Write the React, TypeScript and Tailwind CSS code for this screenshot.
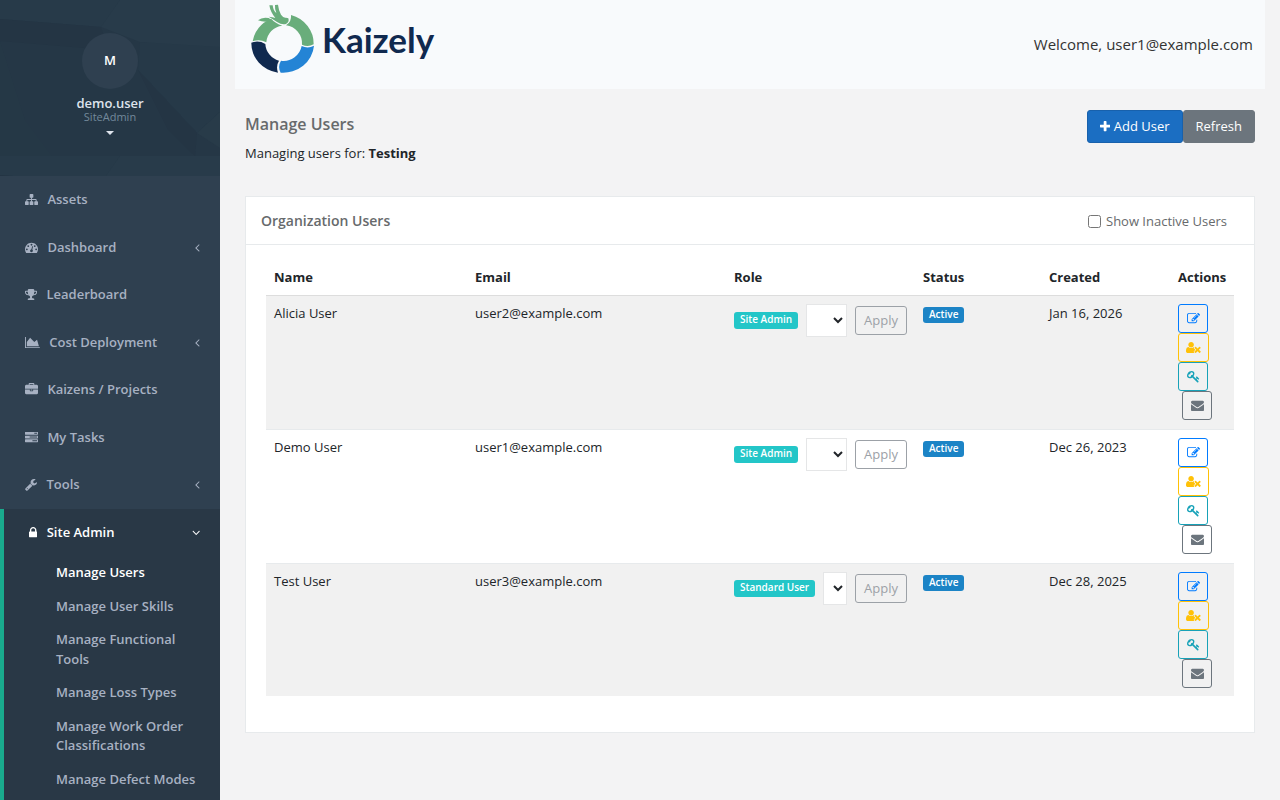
import type { ReactNode } from "react";

const ICONS = {
  sitemap: { box: "0 0 1792 1792", d: "M1792 1248v320q0 40-28 68t-68 28h-320q-40 0-68-28t-28-68v-320q0-40 28-68t68-28h96v-192h-512v192h96q40 0 68 28t28 68v320q0 40-28 68t-68 28h-320q-40 0-68-28t-28-68v-320q0-40 28-68t68-28h96v-192h-512v192h96q40 0 68 28t28 68v320q0 40-28 68t-68 28h-320q-40 0-68-28t-28-68v-320q0-40 28-68t68-28h96v-192q0-52 38-90t90-38h512v-192h-96q-40 0-68-28t-28-68v-320q0-40 28-68t68-28h320q40 0 68 28t28 68v320q0 40-28 68t-68 28h-96v192h512q52 0 90 38t38 90v192h96q40 0 68 28t28 68z" },
  tachometer: { box: "0 0 1792 1792", d: "M384 1152q0-53-37.5-90.5t-90.5-37.5-90.5 37.5-37.5 90.5 37.5 90.5 90.5 37.5 90.5-37.5 37.5-90.5zm192-448q0-53-37.5-90.5t-90.5-37.5-90.5 37.5-37.5 90.5 37.5 90.5 90.5 37.5 90.5-37.5 37.5-90.5zm428 481l101-382q6-26-7.5-48.5t-38.5-29.5-48 6.5-30 39.5l-101 382q-60 5-107 43.5t-63 98.5q-20 77 20 146t117 89 146-20 89-117q16-60-6-117t-72-91zm660-33q0-53-37.5-90.5t-90.5-37.5-90.5 37.5-37.5 90.5 37.5 90.5 90.5 37.5 90.5-37.5 37.5-90.5zm-640-640q0-53-37.5-90.5t-90.5-37.5-90.5 37.5-37.5 90.5 37.5 90.5 90.5 37.5 90.5-37.5 37.5-90.5zm448 192q0-53-37.5-90.5t-90.5-37.5-90.5 37.5-37.5 90.5 37.5 90.5 90.5 37.5 90.5-37.5 37.5-90.5zm320 448q0 261-141 483-19 29-54 29h-1402q-35 0-54-29-141-221-141-483 0-182 71-348t191-286 286-191 348-71 348 71 286 191 191 286 71 348z" },
  trophy: { box: "64 0 1664 1792", d: "M522 883q-74-162-74-371h-256v96q0 78 94.5 162t235.5 113zm1078-275v-96h-256q0 209-74 371 141-29 235.5-113t94.5-162zm128-128v128q0 71-41.5 143t-112 130-173 97.5-215.5 44.5q-42 54-95 95-38 34-52.5 72.5t-14.5 89.5q0 54 30.5 91t97.5 37q75 0 133.5 45.5t58.5 114.5v64q0 14-9 23t-23 9h-832q-14 0-23-9t-9-23v-64q0-69 58.5-114.5t133.5-45.5q67 0 97.5-37t30.5-91q0-51-14.5-89.5t-52.5-72.5q-53-41-95-95-113-5-215.5-44.5t-173-97.5-112-130-41.5-143v-128q0-40 28-68t68-28h288v-96q0-66 47-113t113-47h576q66 0 113 47t47 113v96h288q40 0 68 28t28 68z" },
  areaChart: { box: "0 0 2048 1792", d: "M2048 1536v128h-2048v-1536h128v1408h1920zm-384-1024l256 896h-1664v-576l448-576 576 576z" },
  briefcase: { box: "0 0 1792 1792", d: "M640 256h512v-128h-512v128zm1152 640v480q0 66-47 113t-113 47h-1472q-66 0-113-47t-47-113v-480h672v160q0 26 19 45t45 19h320q26 0 45-19t19-45v-160h672zm-768 0v128h-256v-128h256zm768-480v384h-1792v-384q0-66 47-113t113-47h352v-160q0-40 28-68t68-28h576q40 0 68 28t28 68v160h352q66 0 113 47t47 113z" },
  tasks: { box: "0 0 1792 1792", d: "M1024 1408h640v-128h-640v128zm-384-512h1024v-128h-1024v128zm640-512h384v-128h-384v128zm512 832v256q0 26-19 45t-45 19h-1664q-26 0-45-19t-19-45v-256q0-26 19-45t45-19h1664q26 0 45 19t19 45zm0-512v256q0 26-19 45t-45 19h-1664q-26 0-45-19t-19-45v-256q0-26 19-45t45-19h1664q26 0 45 19t19 45zm0-512v256q0 26-19 45t-45 19h-1664q-26 0-45-19t-19-45v-256q0-26 19-45t45-19h1664q26 0 45 19t19 45z" },
  wrench: { box: "64 0 1664 1792", d: "M448 1472q0-26-19-45t-45-19-45 19-19 45 19 45 45 19 45-19 19-45zm644-420l-682 682q-37 37-90 37-52 0-91-37l-106-108q-38-36-38-90 0-53 38-91l681-681q39 98 114.5 173.5t173.5 114.5zm634-435q0 39-23 106-47 134-164.5 217.5t-258.5 83.5q-185 0-316.5-131.5t-131.5-316.5 131.5-316.5 316.5-131.5q58 0 121.5 16.5t107.5 46.5q16 11 16 28t-16 28l-293 169v224l193 107q5-3 79-48.5t135.5-81 70.5-35.5q15 0 23.5 10t8.5 25z" },
  lock: { box: "320 0 1152 1792", d: "M640 768h512v-192q0-106-75-181t-181-75-181 75-75 181v192zm832 96v576q0 40-28 68t-68 28h-960q-40 0-68-28t-28-68v-576q0-40 28-68t68-28h32v-192q0-184 132-316t316-132 316 132 132 316v192h32q40 0 68 28t28 68z" },
  angleLeft: { box: "576 0 640 1792", d: "M1203 544q0 13-10 23l-393 393 393 393q10 10 10 23t-10 23l-50 50q-10 10-23 10t-23-10l-466-466q-10-10-10-23t10-23l466-466q10-10 23-10t23 10l50 50q10 10 10 23z" },
  angleDown: { box: "320 0 1152 1792", d: "M1395 736q0 13-10 23l-466 466q-10 10-23 10t-23-10l-466-466q-10-10-10-23t10-23l50-50q10-10 23-10t23 10l393 393 393-393q10-10 23-10t23 10l50 50q10 10 10 23z" },
  plus: { box: "192 0 1408 1792", d: "M1600 736v192q0 40-28 68t-68 28h-416v416q0 40-28 68t-68 28h-192q-40 0-68-28t-28-68v-416h-416q-40 0-68-28t-28-68v-192q0-40 28-68t68-28h416v-416q0-40 28-68t68-28h192q40 0 68 28t28 68v416h416q40 0 68 28t28 68z" },
  edit: { box: "0 0 1792 1792", d: "M888 1184l116-116-152-152-116 116v56h96v96h56zm440-720q-16-16-33 1l-350 350q-17 17-1 33t33-1l350-350q17-17 1-33zm80 594v190q0 119-84.5 203.5t-203.5 84.5h-832q-119 0-203.5-84.5t-84.5-203.5v-832q0-119 84.5-203.5t203.5-84.5h832q63 0 117 25 15 7 18 23 3 17-9 29l-49 49q-14 14-32 8-23-6-45-6h-832q-66 0-113 47t-47 113v832q0 66 47 113t113 47h832q66 0 113-47t47-113v-126q0-13 9-22l64-64q15-15 35-7t20 29zm-96-738l288 288-672 672h-288v-288zm444 132l-92 92-288-288 92-92q28-28 68-28t68 28l152 152q28 28 28 68t-28 68z" },
  userTimes: { box: "0 0 2048 1792", d: "M704 896q-159 0-271.5-112.5t-112.5-271.5 112.5-271.5 271.5-112.5 271.5 112.5 112.5 271.5-112.5 271.5-271.5 112.5zm1077 320l249 249q9 9 9 23 0 13-9 22l-136 136q-9 9-22 9-14 0-23-9l-249-249-249 249q-9 9-23 9-13 0-22-9l-136-136q-9-9-9-22 0-14 9-23l249-249-249-249q-9-9-9-23 0-13 9-22l136-136q9-9 22-9 14 0 23 9l249 249 249-249q9-9 23-9 13 0 22 9l136 136q9 9 9 22 0 14-9 23zm-498 0l-181 181q-37 37-37 91 0 53 37 90l83 83q-21 3-44 3h-874q-121 0-194-69t-73-190q0-53 3.5-103.5t14-109 26.5-108.5 43-97.5 62-81 85.5-53.5 111.5-20q19 0 39 17 154 122 319 122t319-122q20-17 39-17 28 0 57 6-28 27-41 50t-13 56q0 54 37 91z" },
  key: { box: "0 0 1792 1792", d: "M832 512q0-80-56-136t-136-56-136 56-56 136q0 42 19 83-41-19-83-19-80 0-136 56t-56 136 56 136 136 56 136-56 56-136q0-42-19-83 41 19 83 19 80 0 136-56t56-136zm851 704q0 17-49 66t-66 49q-9 0-28.5-16t-36.5-33-38.5-40-24.5-26l-96 96 220 220q28 28 28 68 0 42-39 81t-81 39q-40 0-68-28l-671-671q-176 131-365 131-163 0-265.5-102.5t-102.5-265.5q0-160 95-313t248-248 313-95q163 0 265.5 102.5t102.5 265.5q0 189-131 365l355 355 96-96q-3-3-26-24.5t-40-38.5-33-36.5-16-28.5q0-17 49-66t66-49q13 0 23 10 6 6 46 44.5t82 79.5 86.5 86 73 78 28.5 41z" },
  envelope: { box: "0 0 1792 1792", d: "M1792 710v794q0 66-47 113t-113 47h-1472q-66 0-113-47t-47-113v-794q44 49 101 87 362 246 497 345 57 42 92.5 65.5t94.5 48 110 24.5h2q51 0 110-24.5t94.5-48 92.5-65.5q170-123 498-345 57-39 100-87zm0-294q0 79-49 151t-122 123q-376 261-468 325-10 7-42.5 31t-54 38.5-52 32.5-57.5 27-50 9h-2q-23 0-50-9t-57.5-27-52-32.5-54-38.5-42.5-31q-91-64-262-182.5t-205-142.5q-62-42-117-115.5t-55-136.5q0-78 41.5-130t118.5-52h1472q65 0 112.5 47t47.5 113z" },
};

type IconName = keyof typeof ICONS;

function Icon({ name, className = "" }: { name: IconName; className?: string }) {
  return (
    <svg viewBox={ICONS[name].box} className={`inline-block h-[13px] w-auto shrink-0 align-[-2px] fill-current ${className}`} aria-hidden="true">
      <path d={ICONS[name].d} />
    </svg>
  );
}

const NAV: { label: string; icon: IconName; expandable?: boolean }[] = [
  { label: "Assets", icon: "sitemap" },
  { label: "Dashboard", icon: "tachometer", expandable: true },
  { label: "Leaderboard", icon: "trophy" },
  { label: "Cost Deployment", icon: "areaChart", expandable: true },
  { label: "Kaizens / Projects", icon: "briefcase" },
  { label: "My Tasks", icon: "tasks" },
  { label: "Tools", icon: "wrench", expandable: true },
];

const ADMIN_LINKS = [
  "Manage Users",
  "Manage User Skills",
  "Manage Functional Tools",
  "Manage Loss Types",
  "Manage Work Order Classifications",
  "Manage Defect Modes",
];

const USERS = [
  { name: "Alicia User", email: "user2@example.com", role: "Site Admin", created: "Jan 16, 2026" },
  { name: "Demo User", email: "user1@example.com", role: "Site Admin", created: "Dec 26, 2023" },
  { name: "Test User", email: "user3@example.com", role: "Standard User", created: "Dec 28, 2025" },
];

function HeaderPattern() {
  return (
    <svg className="absolute inset-0 size-full" viewBox="0 0 220 176" preserveAspectRatio="none" aria-hidden="true">
      <defs>
        <g id="facets">
          <rect width="220" height="156" fill="#253746" />
          <path d="M0 0H120L101 27L0 19Z" fill="#273a49" />
          <path d="M120 0H220V47Q180 48 140 42L101 27Z" fill="#283b4a" />
          <path d="M0 19L101 27L108 50L0 41Z" fill="#243544" />
          <path d="M0 41L25 120L52 156H0Z" fill="#253846" />
          <path d="M140 42L220 47V112L197 133L138 70Z" fill="#263948" />
          <path d="M138 70L197 133L195 156L168 130Z" fill="#243544" />
          <path d="M197 133L220 112V148Z" fill="#283b49" />
        </g>
      </defs>
      <use href="#facets" />
      <use href="#facets" y="156" />
    </svg>
  );
}

function Sidebar() {
  return (
    <nav className="w-[220px] shrink-0 bg-[#2f4050] text-[13px] leading-normal font-semibold text-[#a7b1c2]">
      <div className="relative flex h-[176px] flex-col items-center overflow-hidden pt-[33px]">
        <HeaderPattern />
        <div className="relative flex size-14 items-center justify-center rounded-full bg-[#2f4050] text-white">M</div>
        <a href="#" className="relative mt-1.5 flex flex-col items-center">
          <span className="leading-4 text-[#dfe4ed]">demo.user</span>
          <span className="text-[11px] leading-3 font-normal text-[#73899b]">SiteAdmin</span>
          <span className="mt-2 border-x-4 border-t-4 border-x-transparent border-t-[#dfe4ed]" />
        </a>
      </div>
      <ul>
        {NAV.map((item) => (
          <li key={item.label}>
            <a href="#" className="flex items-center justify-between py-3.5 pr-5 pl-[25px]">
              <span>
                <Icon name={item.icon} className="mr-1.5" /> {item.label}
              </span>
              {item.expandable && <Icon name="angleLeft" />}
            </a>
          </li>
        ))}
        <li className="border-l-4 border-[#19aa8d] bg-[#293846]">
          <a href="#" className="flex items-center justify-between py-3.5 pr-5 pl-[25px] text-white">
            <span>
              <Icon name="lock" className="mr-1.5" /> Site Admin
            </span>
            <Icon name="angleDown" />
          </a>
          <ul className="pb-10">
            {ADMIN_LINKS.map((label, i) => (
              <li key={label}>
                <a href="#" className={`block py-[7px] pr-2.5 pl-[52px] ${i === 0 ? "text-white" : ""}`}>{label}</a>
              </li>
            ))}
          </ul>
        </li>
      </ul>
    </nav>
  );
}

function Logo() {
  return (
    <a href="#" className="flex items-center gap-1.5">
      <svg viewBox="33 12 195 210" className="h-[70px] w-[65px]" aria-hidden="true">
        <path d="M38 124A93 89 0 0 1 93 56Q106 70 127 77A54 54 0 0 0 79 127Q58 116 38 124Z" fill="#69ad7b" />
        <path d="M153 45A93 89 0 0 1 221 133Q204 142 186 134A55 55 0 0 0 138 76Q155 66 153 45Z" fill="#69ad7b" />
        <path d="M54 61Q66 50 86 54L98 62Q74 69 54 61Z" fill="#69ad7b" />
        <path d="M88 16L98 16Q100 33 109 39Q104 28 105 15L114 14Q116 32 123 44Q131 55 138 53L145 55Q149 66 138 72Q125 75 111 66Q101 59 86 50Q98 51 106 54Q91 36 88 16Z" fill="#69ad7b" />
        <path d="M34 128Q56 120 76 132A55 55 0 0 0 117 182Q107 198 114 218A93 89 0 0 1 34 128Z" fill="#10294f" />
        <path d="M222 137A93 89 0 0 1 122 218Q112 200 123 182A55 55 0 0 0 185 138Q204 147 222 137Z" fill="#2484d5" />
      </svg>
      <span className="font-[Lato,sans-serif] text-[35px] leading-none font-bold text-[#10294f]">Kaizely</span>
    </a>
  );
}

function ActionButton({ label, icon, className }: { label: string; icon: IconName; className: string }) {
  return (
    <button type="button" aria-label={label} className={`flex h-[29px] min-w-[30px] items-center justify-center rounded-[3px] border px-[7px] ${className}`}>
      <Icon name={icon} />
    </button>
  );
}

function Th({ className = "", children }: { className?: string; children: ReactNode }) {
  return <th scope="col" className={`p-2 text-left font-bold ${className}`}>{children}</th>;
}

function UsersTable() {
  return (
    <table className="w-full table-fixed border-collapse text-[#212529]">
      <thead>
        <tr className="border-b border-[#dddddd]">
          <Th className="w-[201px]">Name</Th>
          <Th>Email</Th>
          <Th className="w-[189px]">Role</Th>
          <Th className="w-[126px]">Status</Th>
          <Th className="w-[129px]">Created</Th>
          <Th className="w-16">Actions</Th>
        </tr>
      </thead>
      <tbody>
        {USERS.map((user) => (
          <tr key={user.email} className="h-[134px] border-t border-[#e7eaec] align-top last:h-[132px] odd:bg-[#f1f1f1]">
            <td className="p-2">{user.name}</td>
            <td className="p-2">{user.email}</td>
            <td className="p-2">
              <div className="flex items-center gap-2">
                <span className="shrink-0 rounded-[3px] bg-[#23c6c8] px-1.5 pb-[3px] text-[10px] leading-[14px] font-semibold text-white">{user.role}</span>
                <select aria-label={`Role for ${user.name}`} className="h-[33px] min-w-0 flex-1 border border-[#e5e6e7] bg-white text-[13px]">
                  <option value=""></option>
                  <option>Standard User</option>
                  <option>Site Admin</option>
                </select>
                <button type="button" disabled className="shrink-0 rounded-[3px] border border-[#9ca1a7] px-2 py-1 leading-[19px] text-[#9ca1a7]">Apply</button>
              </div>
            </td>
            <td className="p-2">
              <span className="inline-block rounded-[3px] bg-[#1c84c6] px-1.5 pb-0.5 text-[10px] leading-[14px] font-semibold text-white">Active</span>
            </td>
            <td className="p-2">{user.created}</td>
            <td className="p-2">
              <div className="flex flex-col items-start">
                <ActionButton label="Edit user" icon="edit" className="border-[#007bff] text-[#007bff]" />
                <ActionButton label="Deactivate user" icon="userTimes" className="border-[#ffc107] text-[#ffc107]" />
                <ActionButton label="Reset password" icon="key" className="border-[#17a2b8] text-[#17a2b8]" />
                <ActionButton label="Send email" icon="envelope" className="ml-1 border-[#6c757d] text-[#6c757d]" />
              </div>
            </td>
          </tr>
        ))}
      </tbody>
    </table>
  );
}

export default function App() {
  return (
    <div className="flex h-screen overflow-hidden bg-[#f3f3f4] font-['Open_Sans',sans-serif] text-[13px] leading-normal text-[#212529]">
      <Sidebar />
      <main className="min-w-0 flex-1 px-[15px]">
        <header className="flex h-[89px] items-start justify-between bg-[#f8fafc] px-3">
          <div className="pt-1 pl-1">
            <Logo />
          </div>
          <span className="pt-[33px] text-[15px] text-[#333333]">Welcome, user1@example.com</span>
        </header>

        <div className="px-2.5">
          {/* Page heading */}
          <div className="flex items-start justify-between pt-[21px]">
            <div>
              <h1 className="pt-1 text-[16px] leading-5 font-semibold text-[#676a6c]">Manage Users</h1>
              <p className="mt-2.5">
                Managing users for: <strong className="font-bold">Testing</strong>
              </p>
            </div>
            <div className="flex">
              <button type="button" className="rounded-[3px] border border-[#1861ac] bg-[#1b6ec2] px-3 py-1.5 leading-[19px] text-white">
                <Icon name="plus" /> Add User
              </button>
              <button type="button" className="rounded-[3px] border border-[#6c757d] bg-[#6c757d] px-3 py-1.5 leading-[19px] text-white">Refresh</button>
            </div>
          </div>

          {/* Users panel */}
          <section className="mt-8 border border-[#e7eaec] bg-white">
            <div className="flex h-12 items-center justify-between border-b border-[#e7eaec] pr-[27px] pl-[15px] text-[#676a6c]">
              <h2 className="text-[14px] font-semibold">Organization Users</h2>
              <label className="flex items-center gap-[5px] pt-[3px]">
                <input type="checkbox" className="size-[13px]" />
                Show Inactive Users
              </label>
            </div>
            <div className="px-5 pt-[15px] pb-9">
              <UsersTable />
            </div>
          </section>
        </div>
      </main>
    </div>
  );
}
